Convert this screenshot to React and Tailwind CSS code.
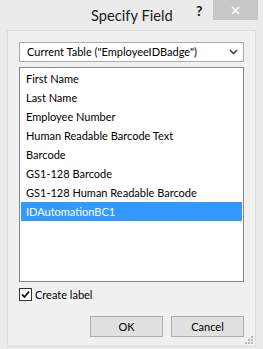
import React from "react";

const items = [
  "First Name",
  "Last Name",
  "Employee Number",
  "Human Readable Barcode Text",
  "Barcode",
  "GS1-128 Barcode",
  "GS1-128 Human Readable Barcode",
  "IDAutomationBC1",
];

export default function App() {
  return (
    <div
      className="w-[263px] h-[349px] bg-[#ebebeb] flex flex-col overflow-hidden text-black"
      style={{ fontFamily: 'Lato, "Liberation Sans", sans-serif' }}
    >
      {/* title bar */}
      <div className="h-[30px] flex items-start shrink-0">
        <div className="pl-[91px] pt-[5px] text-[14.7px] leading-[20px] text-[#222] w-[190px]">Specify Field</div>
        <div className="pt-[2px] w-[23px] text-[14px] font-bold leading-[18px] text-[#111] pl-[6px]">?</div>
        <div className="w-[45px] h-[20px] bg-[#c7c7c7] flex items-center justify-center">
          <svg width="9" height="9" viewBox="0 0 9 9">
            <path d="M1 1 L8 8 M8 1 L1 8" stroke="#fff" strokeWidth="1.6" />
          </svg>
        </div>
      </div>
      {/* client panel */}
      <div className="mx-[7px] h-[317px] border border-[#dcdcdc] bg-[#f0f0f0] flex flex-col px-[11px] pt-[11px] relative">
        <div className="h-[20px] border border-[#acacac] bg-white flex items-center pl-[7px] pr-[5px] text-[11px] leading-[16px]">
          <span className="flex-1">Current Table ("EmployeeIDBadge")</span>
          <svg width="9" height="6" viewBox="0 0 9 6">
            <path d="M1 1 L4.5 4.5 L8 1" stroke="#444" strokeWidth="1.6" fill="none" />
          </svg>
        </div>
        <div className="mt-[5px] h-[215px] border border-[#828790] bg-white p-[1px] flex flex-col">
          {items.map((it, i) => (
            <div
              key={it}
              className={
                "h-[19px] flex items-center pl-[5px] text-[11px] leading-[16px] " +
                (i === 7 ? "bg-[#3399ff] text-white" : "")
              }
            >
              {it}
            </div>
          ))}
        </div>
        <div className="mt-[6px] flex items-center h-[13px]">
          <div className="w-[13px] h-[13px] border border-[#333] bg-white flex items-center justify-center">
            <svg width="9" height="9" viewBox="0 0 9 9">
              <path d="M1 4.5 L3.5 7 L8 1.5" stroke="#111" strokeWidth="1.8" fill="none" />
            </svg>
          </div>
          <span className="ml-[3px] text-[11px] leading-[16px]">Create label</span>
        </div>
        <div className="mt-[15px] flex justify-end gap-[8px]">
          <div className="w-[73px] h-[21px] border border-[#adadad] bg-[#e1e1e1] flex items-center justify-center text-[11px] leading-[16px]">OK</div>
          <div className="w-[73px] h-[21px] border border-[#adadad] bg-[#e1e1e1] flex items-center justify-center text-[11px] leading-[16px]">Cancel</div>
        </div>
        <svg className="absolute right-[2px] bottom-[2px]" width="8" height="8" viewBox="0 0 8 8">
          <rect x="6" y="0" width="2" height="2" fill="#b8b8b8" />
          <rect x="3" y="3" width="2" height="2" fill="#b8b8b8" />
          <rect x="6" y="3" width="2" height="2" fill="#b8b8b8" />
          <rect x="0" y="6" width="2" height="2" fill="#b8b8b8" />
          <rect x="3" y="6" width="2" height="2" fill="#b8b8b8" />
          <rect x="6" y="6" width="2" height="2" fill="#b8b8b8" />
        </svg>
      </div>
    </div>
  );
}
